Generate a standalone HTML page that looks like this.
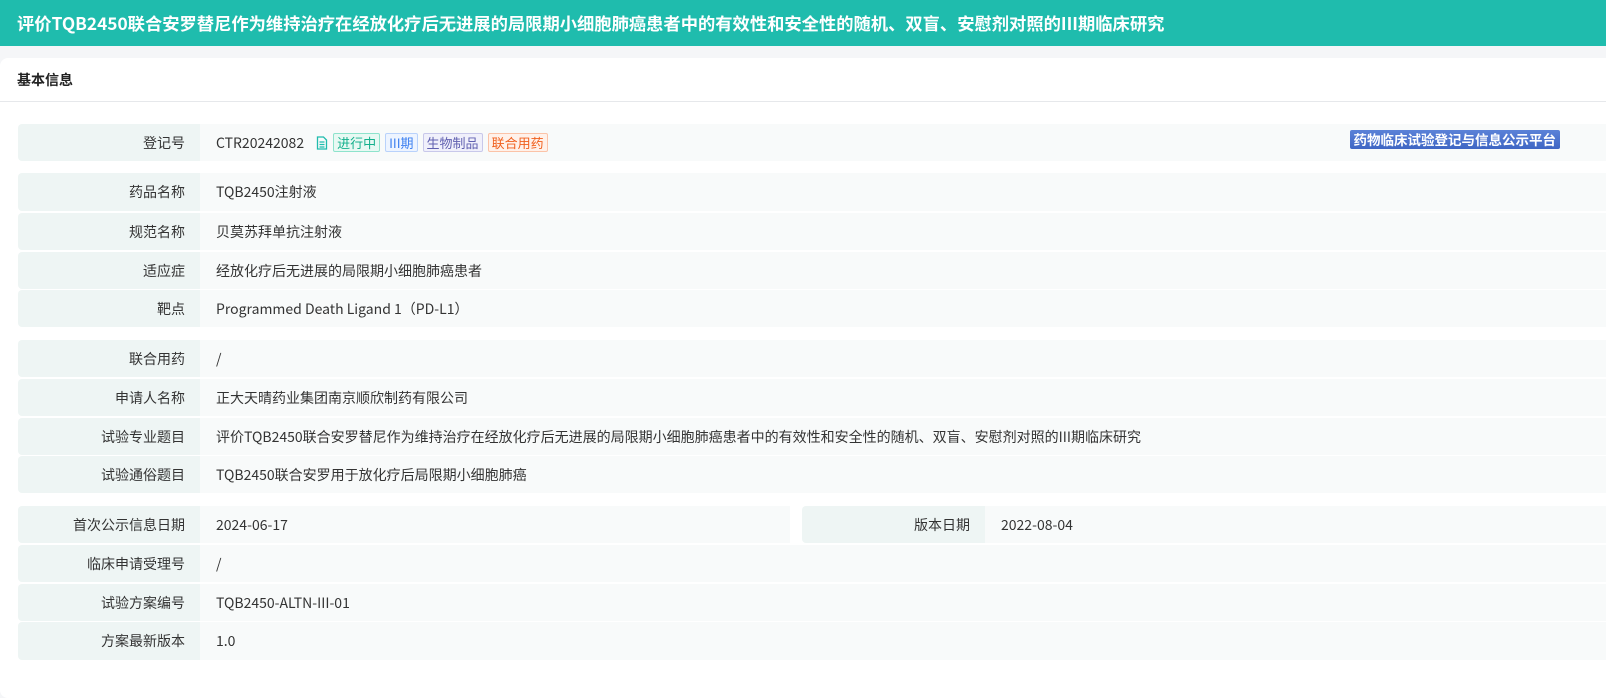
<!DOCTYPE html>
<html><head><meta charset="utf-8"><style>
*{margin:0;padding:0;box-sizing:border-box}
body{width:1606px;height:676px;overflow:hidden;background:#f5f6f8;font-family:"Noto Sans CJK SC","Liberation Sans",sans-serif;color:#333}
.hdr{height:46px;background:#1fbcad;color:#fff;font-weight:bold;font-size:17.3px;line-height:46px;padding-left:17px;white-space:nowrap}
.card{position:absolute;top:58px;left:0;width:1620px;height:640px;background:#fff;border-radius:8px}
.ttl{height:44px;border-bottom:1px solid #e6e8eb;font-weight:bold;font-size:14px;line-height:44px;padding-left:17px;color:#222}
.row{position:absolute;left:18px;right:0;display:flex;font-size:14px}
.lab{width:182px;background:#eef5f4;text-align:right;padding-right:15px;border-radius:4px 0 0 4px;display:flex;align-items:center;justify-content:flex-end;color:#333}
.val{flex:1;background:#f8fafa;padding-left:16px;display:flex;align-items:center;color:#333}
.tag{display:inline-block;font-size:13px;line-height:17px;padding:0 3px;border:1px solid;margin-left:5px;border-radius:2px}
.plat{position:absolute;right:46px;top:6px;background:linear-gradient(#5b82d8,#3f66c4);color:#fff;font-weight:bold;font-size:13.5px;line-height:19px;padding:0 4px;border-radius:2px}
</style></head><body>
<div class="hdr">评价TQB2450联合安罗替尼作为维持治疗在经放化疗后无进展的局限期小细胞肺癌患者中的有效性和安全性的随机、双盲、安慰剂对照的III期临床研究</div>
<div class="card"><div class="ttl">基本信息</div></div>

<div class="row" style="top:124px;height:37px"><div class="lab">登记号</div><div class="val" style="position:relative">CTR20242082
<svg width="12" height="14" viewBox="0 0 12 14" style="margin-left:12px"><path d="M1.5 1h6l3 3v9h-9z" fill="none" stroke="#1fbcad" stroke-width="1.3"/><path d="M3.5 6h5M3.5 8.5h5M3.5 11h5" stroke="#1fbcad" stroke-width="1.2"/></svg>
<span class="tag" style="color:#13b08c;border-color:#8ee3cc;background:#e8f9f3">进行中</span>
<span class="tag" style="color:#3b7ff0;border-color:#b9d2fb;background:#edf4ff">III期</span>
<span class="tag" style="color:#6060b0;border-color:#c8c8ea;background:#f0f0fb">生物制品</span>
<span class="tag" style="color:#f0601e;border-color:#fbc3a8;background:#fff1ea">联合用药</span>
<span class="plat">药物临床试验登记与信息公示平台</span></div></div>

<div class="row" style="top:173px;height:38px"><div class="lab">药品名称</div><div class="val">TQB2450注射液</div></div>
<div class="row" style="top:213px;height:37px"><div class="lab">规范名称</div><div class="val">贝莫苏拜单抗注射液</div></div>
<div class="row" style="top:252px;height:37px"><div class="lab">适应症</div><div class="val">经放化疗后无进展的局限期小细胞肺癌患者</div></div>
<div class="row" style="top:290px;height:37px"><div class="lab">靶点</div><div class="val">Programmed Death Ligand 1（PD-L1）</div></div>

<div class="row" style="top:340px;height:37px"><div class="lab">联合用药</div><div class="val">/</div></div>
<div class="row" style="top:379px;height:37px"><div class="lab">申请人名称</div><div class="val">正大天晴药业集团南京顺欣制药有限公司</div></div>
<div class="row" style="top:418px;height:37px"><div class="lab">试验专业题目</div><div class="val">评价TQB2450联合安罗替尼作为维持治疗在经放化疗后无进展的局限期小细胞肺癌患者中的有效性和安全性的随机、双盲、安慰剂对照的III期临床研究</div></div>
<div class="row" style="top:456px;height:37px"><div class="lab">试验通俗题目</div><div class="val">TQB2450联合安罗用于放化疗后局限期小细胞肺癌</div></div>

<div class="row" style="top:506px;height:37px;right:816px"><div class="lab">首次公示信息日期</div><div class="val">2024-06-17</div></div>
<div class="row" style="top:506px;height:37px;left:802px"><div class="lab" style="width:183px">版本日期</div><div class="val">2022-08-04</div></div>
<div class="row" style="top:545px;height:37px"><div class="lab">临床申请受理号</div><div class="val">/</div></div>
<div class="row" style="top:584px;height:37px"><div class="lab">试验方案编号</div><div class="val">TQB2450-ALTN-III-01</div></div>
<div class="row" style="top:622px;height:38px"><div class="lab">方案最新版本</div><div class="val">1.0</div></div>
</body></html>
